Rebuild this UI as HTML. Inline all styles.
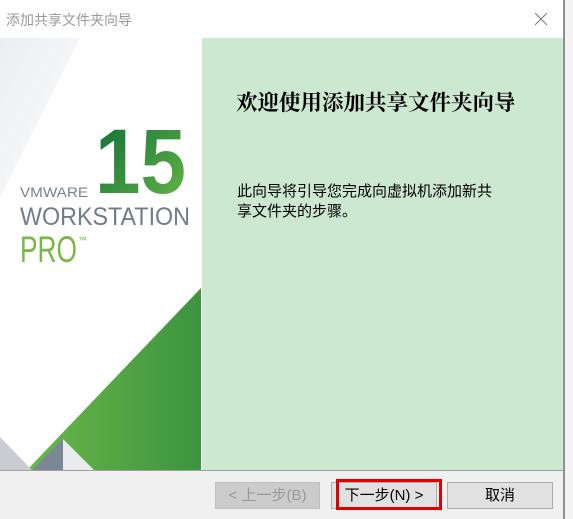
<!DOCTYPE html>
<html><head><meta charset="utf-8"><style>
*{margin:0;padding:0;box-sizing:border-box}
body{width:573px;height:519px;overflow:hidden;background:#fff;position:relative;font-family:"Liberation Sans","Noto Sans CJK SC",sans-serif}
.abs{position:absolute}
.btn{position:absolute;top:482px;height:27px;width:106px;background:#e1e1e1;border:1px solid #adadad;font-size:15px;text-align:center;line-height:25px;color:#000}
</style></head><body>
<div class="abs" style="left:564px;top:0;width:9px;height:519px;background:#f4f4f4;border-left:1px solid #888"></div>
<div class="abs" style="left:0;top:0;width:564px;height:519px;background:#fff;border-right:1px solid #999">
 <div class="abs" style="left:6px;top:10px;font-size:14px;color:#999">添加共享文件夹向导</div>
 <svg class="abs" style="left:535px;top:13px" width="12" height="12"><path d="M0 0L12 12M12 0L0 12" stroke="#777" stroke-width="1"/></svg>
 <svg class="abs" style="left:0;top:38px" width="202" height="432">
  <defs>
   <linearGradient id="g1" x1="0" x2="1" y1="0" y2="0"><stop offset="0" stop-color="#6bb74a"/><stop offset="1" stop-color="#3c943f"/></linearGradient>
   <linearGradient id="g2" x1="0" x2="1" y1="0" y2="1"><stop offset="0" stop-color="#0b6b37"/><stop offset="1" stop-color="#6ab845"/></linearGradient>
   <linearGradient id="gs" x1="0" x2="1" y1="0" y2="1"><stop offset="0" stop-color="#e6e8ec"/><stop offset="1" stop-color="#fff"/></linearGradient>
  </defs>
  <polygon points="0,0 80,0 0,160" fill="url(#gs)" opacity="0.8"/>
  <polygon points="27,432 201,250 201,432" fill="url(#g1)"/>
  <polygon points="0,399 0,432 32,432" fill="#c9cdd2"/>
  <polygon points="32,432 63,401 63,432" fill="#7a8794"/>
  <polygon points="63,401 94,432 63,432" fill="#e9ebee"/>
  <text x="95" y="155" font-family="Liberation Sans" font-weight="bold" font-size="92" fill="url(#g2)" textLength="91" lengthAdjust="spacingAndGlyphs">15</text>
  <text x="20" y="159" font-family="Liberation Sans" font-size="14" fill="#77818b" textLength="68" lengthAdjust="spacingAndGlyphs">VMWARE</text>
  <text x="20" y="187" font-family="Liberation Sans" font-size="25" fill="#727c86" textLength="170" lengthAdjust="spacingAndGlyphs">WORKSTATION</text>
  <text x="20" y="224" font-family="Liberation Sans" font-size="37" fill="#7ab648" textLength="57" lengthAdjust="spacingAndGlyphs">PRO</text>
  <text x="78" y="205" font-family="Liberation Sans" font-size="9" fill="#7ab648">™</text>
 </svg>
 <div class="abs" style="left:202px;top:38px;width:361px;height:432px;background:#cde8d0">
  <div class="abs" style="left:34px;top:48px;font-family:'Noto Serif CJK SC',serif;font-weight:bold;font-size:21.5px;white-space:nowrap;color:#000">欢迎使用添加共享文件夹向导</div>
  <div class="abs" style="left:35px;top:144px;font-size:15px;line-height:20px;width:260px;color:#000">此向导将引导您完成向虚拟机添加新共<br>享文件夹的步骤。</div>
 </div>
 <div class="abs" style="left:0;top:470px;width:563px;height:49px;background:#f0f0f0;border-top:1px solid #a0a0a0"></div>
 <div class="btn" style="left:215px;width:105px;color:#999;background:#ccc;border-color:#bfbfbf">&lt; 上一步(B)</div>
 <div class="btn" style="left:331px">下一步(N) &gt;</div>
 <div class="abs" style="left:336px;top:479px;width:106px;height:31px;border:3px solid #e00000"></div>
 <div class="btn" style="left:447px">取消</div>
</div>
</body></html>
